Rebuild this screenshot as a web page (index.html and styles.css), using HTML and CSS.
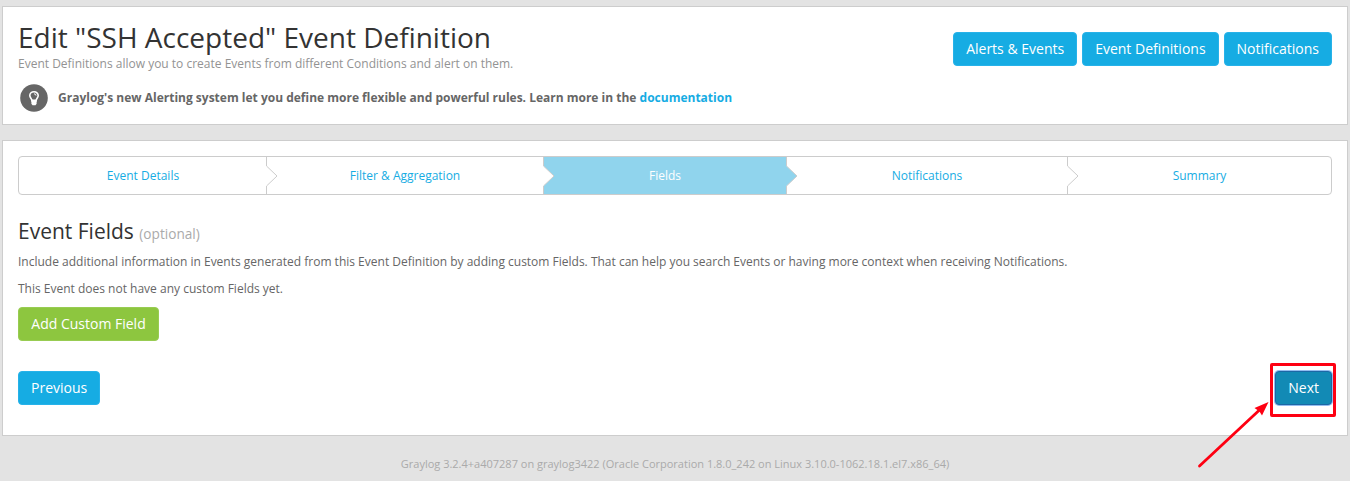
FILE: index.html
```html
<!DOCTYPE html>
<html lang="en">
<head>
<meta charset="utf-8">
<title>Edit "SSH Accepted" Event Definition</title>
<link rel="stylesheet" href="styles.css">
</head>
<body>
<header class="panel page-header">
  <div class="intro">
    <h1>Edit "SSH Accepted" Event Definition</h1>
    <p class="lead">Event Definitions allow you to create Events from different Conditions and alert on them.</p>
    <p class="support">
      <svg class="bulb" viewBox="0 0 28 28" width="28" height="28">
        <circle cx="14" cy="14" r="13.8" fill="#666"/>
        <path d="M12 17C12 14.500 9.800 14 9.800 11.600a4.200 3.900 0 0 1 8.400 0c0 2.400-2.200 2.900-2.200 5.400z" fill="none" stroke="#fff" stroke-width="1.6"/>
        <path d="M14 9.800a2 1.800 0 0 1 2 1.800" fill="none" stroke="#fff"/>
        <path d="M11.400 15.500h5.200v4.300l-1.100 1.500h-3l-1.100-1.500z" fill="#fff"/>
      </svg>
      <strong>Graylog's new Alerting system let you define more flexible and powerful rules. Learn more in the <a href="#">documentation</a></strong>
    </p>
  </div>
  <nav class="toolbar">
    <a class="btn info" href="#">Alerts &amp; Events</a>
    <a class="btn info" href="#">Event Definitions</a>
    <a class="btn info" href="#">Notifications</a>
  </nav>
</header>
<main class="panel content">
  <ol class="steps">
    <li class="step"><span>Event Details</span><svg class="chevron" viewBox="0 0 12 37" width="12" height="37"><path d="M0 0H.5V9L11 19 .5 29V37H0z"/><path class="edge" d="M.5 0V9L11 19 .5 29V37"/></svg></li>
    <li class="step"><span>Filter &amp; Aggregation</span><svg class="chevron" viewBox="0 0 12 37" width="12" height="37"><path d="M0 0H.5V9L11 19 .5 29V37H0z"/><path class="edge" d="M.5 0V9L11 19 .5 29V37"/></svg></li>
    <li class="step active"><span>Fields</span><svg class="chevron" viewBox="0 0 12 37" width="12" height="37"><path d="M0 0H.5V9L11 19 .5 29V37H0z"/><path class="edge" d="M.5 0V9L11 19 .5 29V37"/></svg></li>
    <li class="step"><span>Notifications</span><svg class="chevron" viewBox="0 0 12 37" width="12" height="37"><path d="M0 0H.5V9L11 19 .5 29V37H0z"/><path class="edge" d="M.5 0V9L11 19 .5 29V37"/></svg></li>
    <li class="step"><span>Summary</span></li>
  </ol>
  <h2>Event Fields <small>(optional)</small></h2>
  <p class="text">Include additional information in Events generated from this Event Definition by adding custom Fields. That can help you search Events or having more context when receiving Notifications.</p>
  <p class="text">This Event does not have any custom Fields yet.</p>
  <button class="btn success">Add Custom Field</button>
  <div class="pager">
    <button class="btn info">Previous</button>
    <button class="btn next">Next</button>
  </div>
</main>
<footer>Graylog 3.2.4+a407287 on graylog3422 (Oracle Corporation 1.8.0_242 on Linux 3.10.0-1062.18.1.el7.x86_64)</footer>
<svg class="annotation" viewBox="0 0 150 118" width="150" height="118">
  <rect x="71.500" y="9.500" width="63" height="51" rx=".5" fill="none" stroke="#fe0012" stroke-width="3"/>
  <path d="M-.5 111L60 54.500" stroke="#fe0012" stroke-width="2.800" stroke-linecap="round"/>
  <path d="M68.500 47L62 60.500 59.500 56.500 54.500 53z" fill="#fe0012"/>
</svg>
</body>
</html>
```
FILE: styles.css
```css
* { box-sizing: border-box; }
body {
  margin: 0;
  padding: 6px 2px 0;
  height: 481px;
  overflow: hidden;
  position: relative;
  background: #e3e3e3;
  color: #666;
  font: 12px/18px "Open Sans", "Noto Sans", sans-serif;
}
h1, h2, p, ol { margin: 0; }
a { color: #16ace3; text-decoration: none; }
.panel { background: #fff; border: 1px solid #cdcdcd; padding: 15px; }
.page-header { display: flex; justify-content: space-between; height: 119px; }
h1 { font-size: 28px; line-height: 31px; font-weight: 400; color: #333; }
.lead { color: #939393; line-height: 22px; }
.support { display: flex; align-items: center; gap: 10px; padding-left: 2px; margin-top: 9px; }
.toolbar { display: flex; gap: 5px; padding-top: 10px; align-items: flex-start; }
.btn {
  display: inline-block;
  height: 34px;
  padding: 6px 12px;
  border: 1px solid #27b2e9;
  border-radius: 4px;
  font: 14px/20px "Open Sans", "Noto Sans", sans-serif;
  color: #fff;
}
.info { background: #16ace3; }
.success { background: #8dc63f; border-color: #98cc52; display: block; width: 141px; margin-top: 9px; }
.content { margin-top: 15px; height: 296px; }
.steps {
  display: grid;
  grid-template-columns: 247px 277px 243px 281px 1fr;
  height: 39px;
  padding: 0;
  list-style: none;
  border: 1px solid #ccc;
  border-radius: 4px;
}
.step { position: relative; padding-left: 1px; text-align: center; line-height: 37px; color: #16ace3; }
.active { background: #90d4ed; color: #fff; }
.chevron { position: absolute; left: 100%; top: 0; z-index: 1; fill: #fff; }
.active .chevron { fill: #90d4ed; }
.edge { fill: none; stroke: #ccc; }
h2 { font-size: 21px; line-height: 24px; font-weight: 400; color: #333; margin: 24px 0 7px; }
small { font-size: 13.65px; color: #aaa; }
.text + .text { margin-top: 9px; }
.pager { display: flex; justify-content: space-between; margin-top: 30px; }
.next { background: #128ab5; border-color: #1c68a5; box-shadow: 0 0 0 1px #92bdf0; }
footer { text-align: center; font-size: 11px; color: #aaa; margin-top: 19px; }
.annotation { position: absolute; left: 1200px; top: 355px; overflow: visible; }
```
